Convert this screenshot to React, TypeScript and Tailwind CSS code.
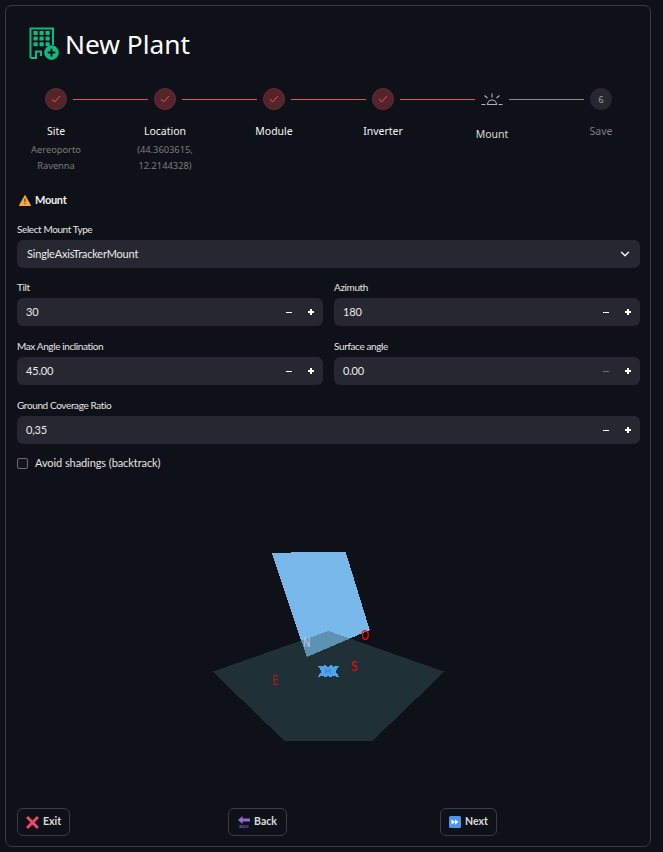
import React from 'react';
import { ChevronDown } from 'lucide-react';

const PlantIcon = () => (
  <svg viewBox="29 27 30 33" className="w-[30px] h-[33px] shrink-0">
    <path d="M30.5 58V28.5H53V45M30.5 58H36V51.5H41V56" fill="none" stroke="#10b981" strokeWidth="2" />
    {[33.5, 39.5, 45.5].map((x) =>
      [31, 36.6, 42.2].map((y) => <rect key={`${x}-${y}`} x={x} y={y} width="4.2" height="4" rx="0.5" fill="#10b981" />)
    )}
    <circle cx="51.5" cy="52.6" r="7.3" fill="#10b981" />
    <path d="M51.5 48.8v7.6M47.7 52.6h7.6" stroke="#0e1117" strokeWidth="2" />
  </svg>
);

const Done = () => (
  <div className="w-[22px] h-[22px] rounded-full bg-[#53242a] border border-[#6a2b30] flex items-center justify-center shrink-0">
    <svg viewBox="0 0 10 8" className="w-[10px] h-[8px]">
      <path d="M1 4l2.6 3L9 1" fill="none" stroke="#f04f54" strokeWidth="1" />
    </svg>
  </div>
);

const MountIcon = () => (
  <svg viewBox="0 0 22 13" className="w-[22px] h-[13px] shrink-0">
    <path d="M11 0.5v4M3.5 2.5l3 2.5M18.5 2.5l-3 2.5M0.5 11.5h4M17.5 11.5h4M6.5 11.5a4.5 4.5 0 0 1 9 0z" fill="none" stroke="#b5b5b5" strokeWidth="1.1" />
  </svg>
);

const Line = ({ on }: { on?: boolean }) => <div className={`w-[75px] h-[1px] shrink-0 ${on ? 'bg-[#e0565a]' : 'bg-[#8a8a8a]'}`} />;

const steps = [
  { name: 'Site', sub: ['Aereoporto', 'Ravenna'] },
  { name: 'Location', sub: ['(44.3603615,', '12.2144328)'] },
  { name: 'Module', sub: [] },
  { name: 'Inverter', sub: [] },
  { name: 'Mount', sub: [], active: true },
  { name: 'Save', sub: [], dim: true },
];

const Stepper = () => (
  <div>
    <div className="flex items-center gap-[6px] pl-[28px] h-[22px]">
      <Done /><Line on /><Done /><Line on /><Done /><Line on /><Done /><Line on />
      <MountIcon />
      <Line />
      <div className="w-[22px] h-[22px] rounded-full bg-[#262730] flex items-center justify-center pt-[2px] text-[9px] text-[#a3a3a3] shrink-0">6</div>
    </div>
    <div className="grid grid-cols-[repeat(6,109px)] -ml-[15.5px] mt-[13px] text-center">
      {steps.map((s) => (
        <div key={s.name} className={s.active ? 'pt-[3px]' : ''}>
          <div className={`text-[10.5px] leading-[17px] ${s.dim ? 'text-[#7f7f7f]' : s.active ? 'text-[#dcdcdc]' : 'text-[#f5f5f5]'}`}>{s.name}</div>
          {s.sub.length > 0 && (
            <div className="mt-[2px] text-[9.3px] leading-[16px] text-[#7d7d7d]">
              {s.sub.map((l) => <div key={l}>{l}</div>)}
            </div>
          )}
        </div>
      ))}
    </div>
  </div>
);

const Warn = () => (
  <svg viewBox="0 0 12 11" className="w-[12px] h-[11px] shrink-0">
    <path d="M6 .5L11.6 10.5H.4z" fill="#f7a84a" stroke="#f7a84a" strokeLinejoin="round" />
    <path d="M6 3.5v3.7M6 8.2v1.1" stroke="#4a3418" strokeWidth="1.1" />
  </svg>
);

const Stepbuttons = ({ dimMinus }: { dimMinus?: boolean }) => (
  <div className="flex items-center gap-[16px] pr-[9px]">
    <div className={`w-[6px] h-[1px] ${dimMinus ? 'bg-[#6f7077]' : 'bg-white'}`} />
    <div className="relative w-[6px] h-[6px]">
      <div className="absolute left-0 top-[2px] w-[6px] h-[2px] bg-white" />
      <div className="absolute left-[2px] top-0 w-[2px] h-[6px] bg-white" />
    </div>
  </div>
);

const Field = ({ label, value, dimMinus, className }: { label: string; value: string; dimMinus?: boolean; className?: string }) => (
  <div className={className}>
    <div className="text-[10px] tracking-[-0.38px] leading-[16px] text-[#e6e6e6] h-[16px]">{label}</div>
    <div className="mt-[3px] h-[28px] rounded-[6px] bg-[#262730] flex items-center justify-between pl-[9px] text-[11px] tracking-[-0.18px] text-[#ececec]">
      <span>{value}</span>
      <Stepbuttons dimMinus={dimMinus} />
    </div>
  </div>
);

const Letter = ({ x, y, fill, children }: { x: number; y: number; fill: string; children: string }) => (
  <text transform={`translate(${x} ${y}) scale(0.75 1)`} fontSize="13.5" fill={fill} fontFamily="DejaVu Sans" fontWeight="400">{children}</text>
);

const Chart = () => (
  <svg viewBox="17 480 623 320" className="w-[623px] h-[320px] block" shapeRendering="crispEdges">
    <polygon points="272,553.3 303,552 345.7,552 369.7,630 306.7,657" fill="#79b8ea" />
    <Letter x={361} y={640} fill="#ff0000">O</Letter>
    <polygon points="212.7,671.7 328.3,631 444.3,671.7 372.7,740.7 284.3,740.7" fill="#395d63" fillOpacity="0.42" />
    <Letter x={303} y={647} fill="#a9cbe8">N</Letter>
    <Letter x={272} y={685} fill="#a51c1c">E</Letter>
    <Letter x={351} y={671} fill="#ff0000">S</Letter>
    <polygon points="317.7,665.5 323,666.5 325,665 328,667 331,665 333.5,666.5 339.3,665.5 335.5,671 339.3,677 333,676 331,677.5 328,676 325,677.5 323,676 317.7,677 321.5,671" fill="#4ea5ee" />
    <polygon points="325,667 328,671 331,667 331.5,675 328,672 324.5,675" fill="#4490d6" />
  </svg>
);

const Btn = ({ children, w }: { children: React.ReactNode; w: string }) => (
  <div className={`h-[28px] ${w} rounded-[6px] border border-[#3a3c42] flex items-center justify-center gap-[4px] text-[10.5px] font-bold text-[#dcdcdc]`}>{children}</div>
);

export default function App() {
  return (
    <div className="min-h-screen bg-[#0e1117] pt-[5px] pl-[5px] font-['Lato',sans-serif]">
      <div className="w-[646px] h-[842px] rounded-[7px] border border-[#3a3c42] pl-[11px] pr-[10px] pt-[21px] overflow-hidden">
        <div className="flex items-center gap-[6px] h-[33px] ml-[12px] font-['Noto_Sans',sans-serif]">
          <PlantIcon />
          <h1 className="text-[26.3px] leading-[33px] text-white pt-[2px]">New Plant</h1>
        </div>
        <div className="mt-[28px] font-['Noto_Sans',sans-serif]"><Stepper /></div>

        <div className="flex items-center gap-[4px] mt-[18px] ml-[2px] h-[16px] text-[11px] tracking-[-0.3px] font-bold text-[#eeeeee]">
          <Warn />Mount
        </div>

        <div className="mt-[13px] text-[10px] tracking-[-0.4px] leading-[16px] text-[#e6e6e6]">Select Mount Type</div>
        <div className="mt-[3px] h-[28px] rounded-[6px] bg-[#262730] flex items-center justify-between pl-[10px] pr-[8px] text-[11px] tracking-[-0.18px] text-[#ececec]">
          <span>SingleAxisTrackerMount</span>
          <ChevronDown className="w-[14px] h-[14px] text-white" strokeWidth={2.2} />
        </div>

        <div className="grid grid-cols-2 gap-x-[11px] gap-y-[12px] mt-[11px]">
          <Field label="Tilt" value="30" />
          <Field label="Azimuth" value="180" />
          <Field label="Max Angle inclination" value="45.00" />
          <Field label="Surface angle" value="0.00" dimMinus />
          <Field label="Ground Coverage Ratio" value="0,35" className="col-span-2" />
        </div>

        <div className="flex items-center gap-[7px] mt-[11px] h-[16px] text-[11px] tracking-[-0.08px] text-[#e6e6e6]">
          <div className="w-[11px] h-[11px] rounded-[2px] border border-[#6b6c72] bg-[#14161c]" />
          Avoid shadings (backtrack)
        </div>

        <div className="mt-[9px]"><Chart /></div>

        <div className="grid grid-cols-[211px_212px_1fr] mt-[8px]">
          <div>
            <Btn w="w-[53px]">
              <svg viewBox="0 0 12 12" className="w-[13px] h-[13px]"><path d="M1 1l10 10M11 1L1 11" stroke="#f4476b" strokeWidth="2.6" /></svg>
              Exit
            </Btn>
          </div>
          <div>
            <Btn w="w-[59px]">
              <svg viewBox="0 0 12 12" className="w-[12px] h-[12px]">
                <path d="M0 4L4.5 0v2.4H12v3.2H4.5V8z" fill="#8e6fd0" />
                <text x="6" y="11.8" fontSize="3.6" textAnchor="middle" fill="#7a5cc0" fontWeight="700">BACK</text>
              </svg>
              Back
            </Btn>
          </div>
          <div>
            <Btn w="w-[57px]">
              <svg viewBox="0 0 12 12" className="w-[12px] h-[12px]">
                <rect width="12" height="12" rx="1.5" fill="#4f94ee" />
                <path d="M2.5 3.5L6 6 2.5 8.5zM6 3.5L9.5 6 6 8.5z" fill="#fff" />
              </svg>
              Next
            </Btn>
          </div>
        </div>
      </div>
    </div>
  );
}
